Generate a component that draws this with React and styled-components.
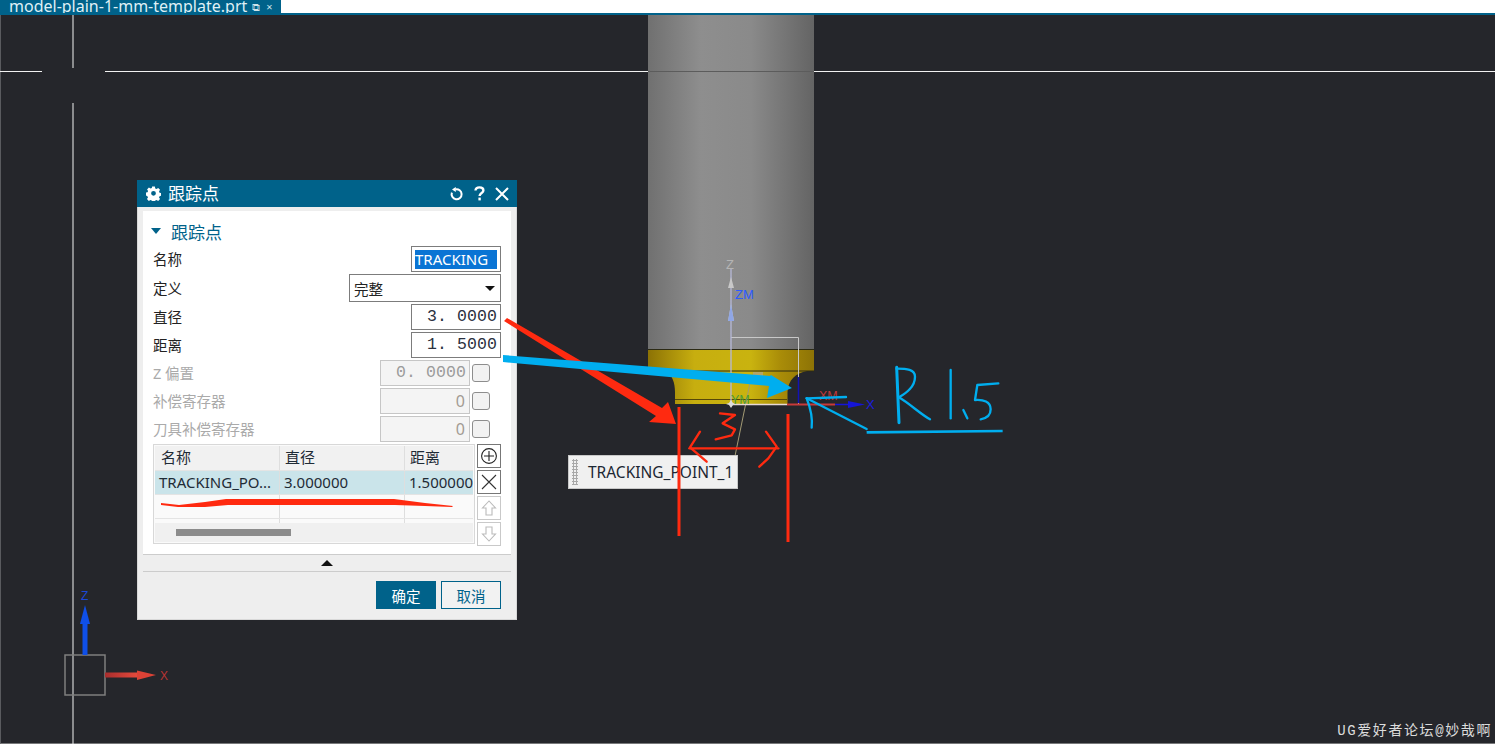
import React from "react";
import styled, { createGlobalStyle } from "styled-components";

const teal = "#00628a";
const ui = `"Noto Sans", "Noto Sans CJK SC", sans-serif`;
const mono = `"Liberation Mono", "Noto Sans CJK SC", monospace`;

const Global = createGlobalStyle`
  html, body { margin: 0; padding: 0; height: 100%; background: #25262b; overflow: hidden; }
  #root { height: 100%; }
`;

const Page = styled.div`
  width: 1495px; height: 744px; display: flex; flex-direction: column; background: #fff; overflow: hidden;
`;
const TabStrip = styled.div`
  height: 13px; flex: none; display: flex; background: #fff; overflow: hidden;
`;
const Tab = styled.div`
  width: 281px; height: 13px; background: ${teal}; color: #fff; position: relative;
  display: flex; align-items: flex-end; gap: 5px; padding-left: 9px; box-sizing: border-box;
  font: 16px/20px ${ui}; white-space: nowrap; overflow: hidden;
`;
const TabText = styled.span`
  display: block; margin-bottom: -3px; color: #dff0f6;
`;
const TabIcons = styled.span`
  font-size: 11px; line-height: 13px; color: #cfe3ea; display: flex; gap: 6px;
`;
const TealRule = styled.div`
  height: 2px; flex: none; background: ${teal};
`;
const Canvas = styled.div`
  position: relative; flex: 1; background: #25262b; border-left: 1px solid #5a5b5f;
  border-bottom: 1px solid #77787a; box-sizing: border-box;
`;
const Scene = styled.svg`
  position: absolute; left: -1px; top: -15px; width: 1495px; height: 744px; display: block;
`;
const Overlay = styled.svg`
  position: absolute; left: -1px; top: -15px; width: 1495px; height: 744px; display: block;
  z-index: 5; pointer-events: none;
`;
const Watermark = styled.div`
  position: absolute; right: 3px; bottom: 2px; color: #dcdcdc; font: 14px/20px ${mono}; letter-spacing: 1.6px;
`;
const TrackTag = styled.div`
  position: absolute; left: 567px; top: 440px; width: 170px; height: 34px; box-sizing: border-box;
  background: #f0f0f0; border: 1px solid #c8c8c8; display: flex; align-items: center; gap: 10px; padding-left: 3px;
  color: #1c2733; font: 15.5px/20px ${ui};
`;
const Grip = styled.span`
  width: 6px; height: 26px; flex: none;
  background-image: radial-gradient(circle, #a8a8a8 1.1px, transparent 1.2px);
  background-size: 3px 3px;
`;
const Dialog = styled.div`
  position: absolute; left: 136px; top: 165px; width: 380px; height: 440px; background: #eee;
  display: flex; flex-direction: column; box-shadow: 0 0 0 1px #d8d8d8 inset;
  font-family: ${ui}; color: #222;
`;
const TitleBar = styled.div`
  height: 27px; flex: none; background: ${teal}; color: #fff; display: flex; align-items: center;
  padding: 0 9px; gap: 7px; font-size: 17px;
`;
const TitleText = styled.span`
  flex: 1; line-height: 27px;
`;
const TitleIcons = styled.div`
  display: flex; align-items: center; gap: 10px; margin-right: -1px;
`;
const Panel = styled.div`
  margin: 4px 6px 0; height: 344px; flex: none; background: #fff; border-bottom: 1px solid #ccc;
  padding: 5px 10px 0; box-sizing: border-box; display: flex; flex-direction: column;
`;
const SectionHead = styled.div`
  height: 30px; flex: none; display: flex; align-items: center; gap: 10px; color: ${teal}; font-size: 17px; margin-left: -2px;
`;
const Triangle = styled.span`
  width: 0; height: 0; border-left: 5.5px solid transparent; border-right: 5.5px solid transparent;
  border-top: ${p => p.$size || 6}px solid ${p => p.$color || teal};
`;
const Rows = styled.div`
  display: flex; flex-direction: column; gap: 2px;
`;
const Row = styled.div`
  height: ${p => p.$h || 26}px; display: flex; align-items: center; gap: 2px; padding-right: ${p => p.$pad || 0}px;
  color: ${p => (p.$off ? "#aaa" : "#222")}; font-size: 14.5px;
`;
const Label = styled.span`
  flex: 1; line-height: 26px;
`;
const Field = styled.div`
  width: ${p => p.$w || 90}px; height: 100%; box-sizing: border-box; flex: none;
  border: 1px solid ${p => (p.$off ? "#c6c6c6" : "#7c7c7c")}; background: ${p => (p.$off ? "#f4f4f4" : "#fff")};
  display: flex; align-items: center; justify-content: flex-end; padding: 0 3px;
`;
const Selected = styled.span`
  background: #0a74d4; color: #fff; font-size: 15px; line-height: 19px; padding: 0 1px 0 0; width: 81px; text-align: left;
  white-space: nowrap; overflow: hidden;
`;
const Num = styled.span`
  font: 16.5px/22px ${mono}; letter-spacing: 0.1px; color: ${p => (p.$off ? "#9b9b9b" : "#2a3140")};
`;
const Zero = styled.span`
  font: 16px/22px ${ui}; color: #a29b93; padding-right: 1px;
`;
const Check = styled.span`
  width: 16px; height: 16px; flex: none; border: 1px solid #8d8d8d; border-radius: 3px; background: #f2f2f2; margin: 0 11px 0 0;
`;
const Combo = styled.div`
  width: 152px; height: 100%; flex: none; box-sizing: border-box; border: 1px solid #7c7c7c; background: #fff;
  display: flex; align-items: center; justify-content: space-between; padding: 0 5px 0 4px; color: #222;
`;
const TableRow = styled.div`
  margin-top: 2px; display: flex; gap: 2px; height: 102px;
`;
const Table = styled.div`
  width: 322px; height: 100px; box-sizing: border-box; border: 1px solid #d8d8d8; padding: 1px; flex: none;
  display: flex; flex-direction: column; overflow: hidden; background: #fafafa;
`;
const Tr = styled.div`
  display: grid; grid-template-columns: 125px 125px 69px; height: ${p => p.$h}px; flex: none;
  background: ${p => p.$bg}; border-bottom: ${p => (p.$nb ? "none" : "1px solid #e4e4e4")}; box-sizing: border-box;
`;
const Td = styled.div`
  border-right: ${p => (p.$last ? "none" : "1px solid #dedede")}; padding-left: ${p => p.$pl || 4}px; font-size: 15px;
  line-height: 22px; white-space: nowrap; overflow: hidden; color: #1f2b36;
`;
const ScrollTrack = styled.div`
  flex: 1; background: #f0f0f0; display: flex; align-items: center; padding-left: 21px;
`;
const ScrollThumb = styled.div`
  width: 115px; height: 7px; background: #8c8c8c;
`;
const SideButtons = styled.div`
  display: flex; flex-direction: column; gap: 2px;
`;
const SideButton = styled.div`
  width: 24px; height: 24px; box-sizing: border-box; border: 1px solid ${p => (p.$off ? "#c9c9c9" : "#777")}; background: #fff;
  display: flex; align-items: center; justify-content: center;
`;
const Collapse = styled.div`
  margin: 0 6px; height: 16px; flex: none; border-bottom: 1px solid #ccc; display: flex; align-items: center; justify-content: center;
`;
const UpTriangle = styled.span`
  width: 0; height: 0; border-left: 6px solid transparent; border-right: 6px solid transparent; border-bottom: 6px solid #111;
`;
const Footer = styled.div`
  flex: 1; display: flex; justify-content: flex-end; gap: 5px; padding: 9px 16px 0 0;
`;
const Btn = styled.div`
  width: 60px; height: 28px; box-sizing: border-box; display: flex; align-items: center; justify-content: center; font-size: 14.5px;
  background: ${p => (p.$primary ? teal : "#f2f2f2")}; color: ${p => (p.$primary ? "#fff" : teal)};
  border: 1px solid ${teal};
`;

const GearIcon = () => (
  <svg width="15" height="15" viewBox="0 0 15 15">
    <path fill="#fff" fillRule="evenodd" d="M6 .5h3l.4 2 1.4.6 1.8-1.1 2 2.1-1.1 1.7.6 1.4 1.9.4v2.9l-1.9.4-.6 1.4 1.1 1.7-2 2.1-1.8-1.1-1.4.6-.4 2H6l-.4-2-1.4-.6-1.8 1.1-2-2.1 1.1-1.7-.6-1.4L-.9 10V7.1l1.9-.4.6-1.4L.5 3.6l2-2.1 1.8 1.1 1.4-.6zM7.5 5.3a2.6 2.6 0 1 0 0 5.2 2.6 2.6 0 0 0 0-5.2z" transform="translate(.6 .1) scale(.92)" />
  </svg>
);
const ResetIcon = () => (
  <svg width="14" height="14" viewBox="0 0 14 14" fill="none" stroke="#fff" strokeWidth="2">
    <path d="M5.5 2.4a5 5 0 1 1-3.6 3.2" />
    <path d="M5.8 0v5L2 2.5z" fill="#fff" stroke="none" />
  </svg>
);
const HelpIcon = () => (
  <svg width="11" height="15" viewBox="0 0 11 15" fill="none" stroke="#fff" strokeWidth="2.4">
    <path d="M1.5 4.5C1.5 2.5 3 1.4 5.4 1.4s4 1.2 4 3c0 2.6-3.8 2.6-3.8 5.6" />
    <path d="M5.6 11.6v2.8" />
  </svg>
);
const CloseIcon = () => (
  <svg width="14" height="14" viewBox="0 0 14 14" stroke="#fff" strokeWidth="2"><path d="M1 1l12 12M13 1L1 13" /></svg>
);
const AddIcon = () => (
  <svg width="18" height="18" viewBox="0 0 18 18" fill="none" stroke="#222" strokeWidth="1.1">
    <circle cx="9" cy="9" r="7.4" /><path d="M9 4v10M4 9h10" />
  </svg>
);
const DeleteIcon = () => (
  <svg width="18" height="18" viewBox="0 0 18 18" stroke="#333" strokeWidth="1.1"><path d="M2 2l14 14M16 2L2 16" /></svg>
);
const ArrowIcon = ({ down }) => (
  <svg width="16" height="18" viewBox="0 0 16 18" fill="#fff" stroke="#bbb" strokeWidth="1.1" style={down ? { transform: "scaleY(-1)" } : undefined}>
    <path d="M8 2L1.5 9H5v7h6V9h3.5z" />
  </svg>
);

const SceneDrawing = () => (
  <Scene viewBox="0 0 1495 744">
    <defs>
      <linearGradient id="steel" x1="0" x2="1" y1="0" y2="0">
        <stop offset="0" stopColor="#707070" />
        <stop offset=".32" stopColor="#8e8e8e" />
        <stop offset=".62" stopColor="#8a8a8a" />
        <stop offset="1" stopColor="#646464" />
      </linearGradient>
      <linearGradient id="gold" x1="0" x2="1" y1="0" y2="0">
        <stop offset="0" stopColor="#8c7205" />
        <stop offset=".28" stopColor="#c7ae0f" />
        <stop offset=".62" stopColor="#c9b30f" />
        <stop offset=".8" stopColor="#a98c08" />
        <stop offset="1" stopColor="#8d7306" />
      </linearGradient>
      <linearGradient id="red" x1="0" x2="1" y1="0" y2="0">
        <stop offset="0" stopColor="#a82d2d" />
        <stop offset="1" stopColor="#e64a3c" />
      </linearGradient>
    </defs>
    <path d="M73 15V68M73 103V744M0 71.5H42M105 71.5H648M814 71.5H1495" stroke="#f2f2f2" strokeWidth="1" />
    <rect x="648" y="15" width="166" height="334" fill="url(#steel)" />
    <path d="M648 71.5H814" stroke="#5c5c5c" strokeWidth="1" />
    <path d="M648 349H814V371H807C796 373 788 380 787.5 392V404H675V392C675 382 672 376 667 371H648Z" fill="url(#gold)" />
    <path d="M648 349.5H814M648 371H814" stroke="#2c2a14" strokeWidth="1" />
    <path d="M675 399.5H787" stroke="#574808" strokeWidth="1" />
    <rect x="753" y="372" width="10" height="12" fill="#b4a465" />
    <path d="M751 378L735 456" stroke="#a39a74" strokeWidth="1" />
    <path d="M731 337.5H798.5V404" fill="none" stroke="#c8c8c8" strokeWidth="1" />
    <path d="M731 268V404" stroke="#b6b9d8" strokeWidth="1.3" />
    <path d="M731 277l-3 11h6zM731 304l-3 17h6z" fill="#c8c8c8" />
    <path d="M731 304l-3 17h6z" fill="#8fa6e6" />
    <path d="M798.5 377V403" stroke="#1212b4" strokeWidth="1.5" />
    <path d="M731 404.5H787" stroke="#e8d9d6" strokeWidth="1.6" />
    <path d="M787 404.5H835" stroke="#c83a3a" strokeWidth="2" />
    <path d="M835 404.5H852" stroke="#1515d8" strokeWidth="1.5" />
    <path d="M848 401L865 404.5L848 408Z" fill="#1515d8" />
    <path d="M731 400l2 3 3 1-3 1-2 3-2-3-3-1 3-1z" fill="#ddd" />
    <text x="726" y="269" fontFamily="Liberation Sans" fontSize="13" fill="#b4b4b4">Z</text>
    <text x="735" y="299" fontFamily="Liberation Sans" fontSize="13" fill="#2d5bff">ZM</text>
    <text x="731" y="404" fontFamily="Liberation Sans" fontSize="12.5" fill="#4c9c3a">YM</text>
    <text x="819" y="400" fontFamily="Liberation Sans" fontSize="12.5" fill="#c0373a">XM</text>
    <text x="866" y="409" fontFamily="Liberation Sans" fontSize="13" fill="#1c1ce0">X</text>

    <rect x="65" y="655" width="40" height="40" fill="none" stroke="#7f7f7f" strokeWidth="1.5" />
    <path d="M82.500 655V622H87.500V655Z" fill="#0f4fe8" />
    <path d="M85 605L90 624H80Z" fill="#0f4fe8" />
    <text x="81" y="600" fontFamily="Liberation Sans" fontSize="12" fill="#1b48d8">Z</text>
    <path d="M105 672.500H137V677.500H105Z" fill="url(#red)" />
    <path d="M137 670.500L156 675L137 680Z" fill="#dc4236" />
    <text x="160" y="680" fontFamily="Liberation Sans" fontSize="12" fill="#b83434">X</text>
  </Scene>
);

const Annotations = () => (
  <Overlay viewBox="0 0 1495 744">
    <path d="M133 393C148 394 162 396 196 396C220 395 232 389 258 385H478C500 386 520 392 450 396C570 396 440 400 454 397" fill="none" transform="translate(0 0)" />
    <path d="M161 503L179 505L205 502L226 499H394L425 503L453 506L452 507L425 506L395 505H228L205 507L178 507L161 505Z" fill="#ff2a10" />
    <g fill="none" stroke="#ff2a10" strokeLinecap="round" strokeLinejoin="round">
      <path d="M679 407V536" strokeWidth="3" strokeLinecap="butt" />
      <path d="M788 414V542" strokeWidth="3" strokeLinecap="butt" />
      <g transform="translate(560 250) scale(.33333)" strokeWidth="7">
        <path d="M480 490L525 495L488 520L525 538L515 556L467 568" />
        <path d="M388 595H655" />
        <path d="M420 545L390 592L440 635" />
        <path d="M618 545L650 590L625 625L598 650" />
      </g>
    </g>
    <path d="M504 321L507 318L662 408L668 402L676 424L649 422L656 416Z" fill="#ff2a10" />
    <g fill="none" stroke="#00aeef" strokeLinecap="round" strokeLinejoin="round">
      <g transform="translate(560 250) scale(.33333)" strokeWidth="7">
        <path d="M1010 352L1017 518" strokeWidth="9" />
        <path d="M1010 356C1040 356 1065 358 1065 380C1065 410 1040 428 1017 442C1050 462 1085 495 1110 508" />
        <path d="M1172 360L1172 505" />
        <path d="M1210 480L1222 505" />
        <path d="M1315 400L1252 405L1245 450C1270 448 1292 455 1292 478C1292 498 1280 505 1262 508" />
        <path d="M920 547L1328 543" strokeLinecap="butt" strokeWidth="8" />
        <path d="M920 537L740 445" />
        <path d="M740 445L858 441" />
        <path d="M740 445C752 475 758 505 755 533" />
      </g>
    </g>
    <path d="M503 355L770 376L771 375L792 388L767 398L769 386L503 362Z" fill="#00aeef" />
  </Overlay>
);

const Dlg = () => (
  <Dialog>
    <TitleBar>
      <GearIcon />
      <TitleText>跟踪点</TitleText>
      <TitleIcons>
        <ResetIcon />
        <HelpIcon />
        <CloseIcon />
      </TitleIcons>
    </TitleBar>
    <Panel>
      <SectionHead>
        <Triangle />
        跟踪点
      </SectionHead>
      <Rows>
        <Row>
          <Label>名称</Label>
          <Field><Selected>TRACKING</Selected></Field>
        </Row>
        <Row $h={28}>
          <Label>定义</Label>
          <Combo>完整<Triangle $color="#111" $size={5} /></Combo>
        </Row>
        <Row>
          <Label>直径</Label>
          <Field><Num>3.&nbsp;0000</Num></Field>
        </Row>
        <Row>
          <Label>距离</Label>
          <Field><Num>1.&nbsp;5000</Num></Field>
        </Row>
        <Row $off>
          <Label>Z 偏置</Label>
          <Field $off><Num $off>0.&nbsp;0000</Num></Field>
          <Check />
        </Row>
        <Row $off>
          <Label>补偿寄存器</Label>
          <Field $off><Zero>0</Zero></Field>
          <Check />
        </Row>
        <Row $off>
          <Label>刀具补偿寄存器</Label>
          <Field $off><Zero>0</Zero></Field>
          <Check />
        </Row>
      </Rows>
      <TableRow>
        <Table>
          <Tr $h={25} $bg="#f1f1f1">
            <Td $pl={6}>名称</Td>
            <Td $pl={5}>直径</Td>
            <Td $pl={5} $last>距离</Td>
          </Tr>
          <Tr $h={24} $bg="#cae4ea">
            <Td>TRACKING_PO...</Td>
            <Td>3.000000</Td>
            <Td $last>1.500000</Td>
          </Tr>
          <Tr $h={24} $bg="#fafafa"><Td /><Td /><Td $last /></Tr>
          <Tr $h={4} $bg="#fafafa" $nb><Td /><Td /><Td $last /></Tr>
          <ScrollTrack><ScrollThumb /></ScrollTrack>
        </Table>
        <SideButtons>
          <SideButton><AddIcon /></SideButton>
          <SideButton><DeleteIcon /></SideButton>
          <SideButton $off><ArrowIcon /></SideButton>
          <SideButton $off><ArrowIcon down /></SideButton>
        </SideButtons>
      </TableRow>
    </Panel>
    <Collapse><UpTriangle /></Collapse>
    <Footer>
      <Btn $primary>确定</Btn>
      <Btn>取消</Btn>
    </Footer>
  </Dialog>
);

export default function App() {
  return (
    <Page>
      <Global />
      <TabStrip>
        <Tab>
          <TabText>model-plain-1-mm-template.prt</TabText>
          <TabIcons><span>⧉</span><span>×</span></TabIcons>
        </Tab>
      </TabStrip>
      <TealRule />
      <Canvas>
        <SceneDrawing />
        <Dlg />
        <TrackTag><Grip />TRACKING_POINT_1</TrackTag>
        <Annotations />
        <Watermark>UG爱好者论坛@妙哉啊</Watermark>
      </Canvas>
    </Page>
  );
}
